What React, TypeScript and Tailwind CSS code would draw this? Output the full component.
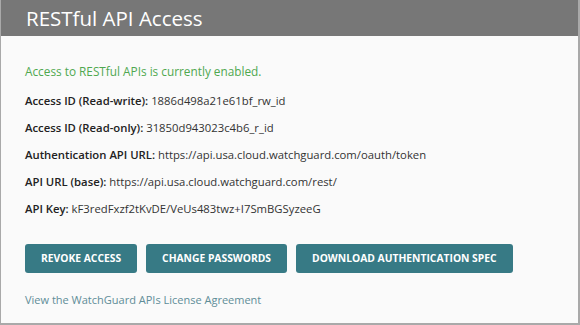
import React from "react";

const rows: [string, string][] = [
  ["Access ID (Read-write):", "1886d498a21e61bf_rw_id"],
  ["Access ID (Read-only):", "31850d943023c4b6_r_id"],
  ["Authentication API URL:", "https://api.usa.cloud.watchguard.com/oauth/token"],
  ["API URL (base):", "https://api.usa.cloud.watchguard.com/rest/"],
  ["API Key:", "kF3redFxzf2tKvDE/VeUs483twz+I7SmBGSyzeeG"],
];

export default function App() {
  return (
    <div
      className="w-[580px] h-[325px] bg-[#fafafa] border-l border-r-2 border-b-2 border-[#a9a9a9] flex flex-col"
      style={{ fontFamily: '"Open Sans", sans-serif' }}
    >
      <div className="h-[36px] bg-[#777777] flex items-center pl-[25px] shrink-0">
        <span className="text-white text-[20.5px] leading-none">RESTful API Access</span>
      </div>
      <div className="pl-[24px] pt-[27px] flex flex-col">
        <div className="text-[11.8px] text-[#4fa84f] leading-[16px]">
          Access to RESTful APIs is currently enabled.
        </div>
        <div className="flex flex-col gap-[11px] mt-[14px]">
          {rows.map(([k, v]) => (
            <div key={k} className="text-[11.3px] leading-[16px] text-[#333333]">
              <span className="font-semibold text-[#222222]">{k}</span> {v}
            </div>
          ))}
        </div>
        <div className="flex gap-[9px] mt-[27px]">
          {["REVOKE ACCESS", "CHANGE PASSWORDS", "DOWNLOAD AUTHENTICATION SPEC"].map((b) => (
            <button
              key={b}
              className="h-[29px] px-[16px] rounded-[3px] bg-[#377a85] text-white text-[10.3px] font-bold"
            >
              {b}
            </button>
          ))}
        </div>
        <div className="mt-[19px] text-[11px] text-[#5f8d98] leading-[16px]">
          View the WatchGuard APIs License Agreement
        </div>
      </div>
    </div>
  );
}
